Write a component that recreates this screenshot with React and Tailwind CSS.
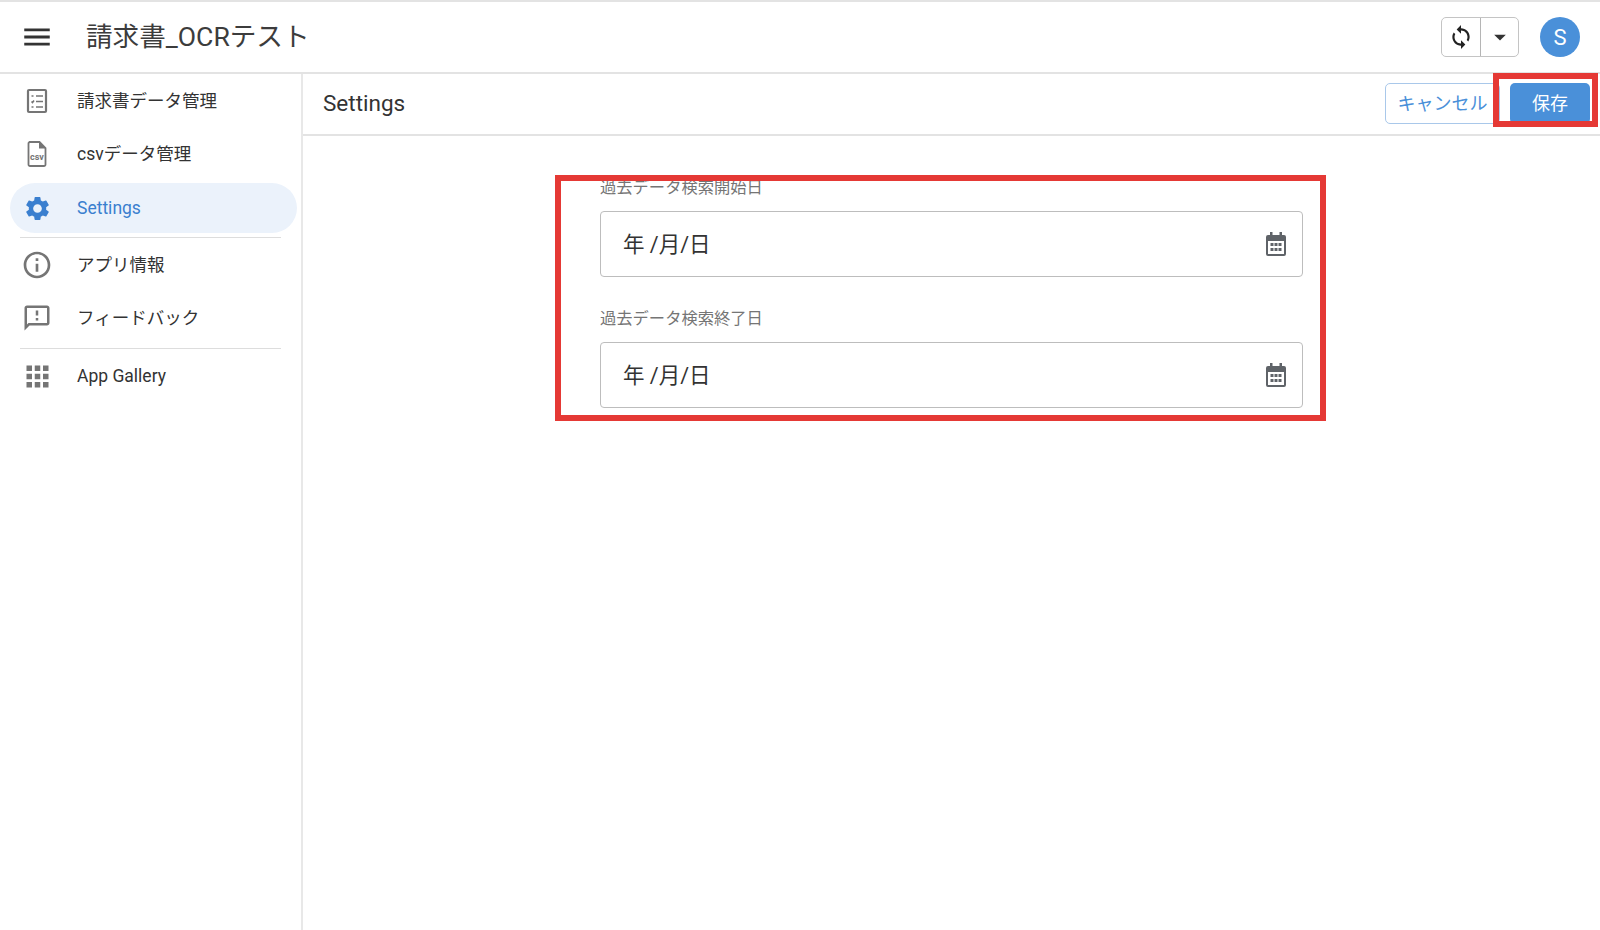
import { MdMenu, MdSettings, MdInfoOutline, MdOutlineFeedback, MdApps, MdSync, MdArrowDropDown } from "react-icons/md";

const ListIcon = () => (
  <svg width="24" height="27" viewBox="0 0 24 27" fill="none" stroke="#757575">
    <rect x="3" y="2" width="18" height="22" rx="1" strokeWidth="2.2" />
    <path d="M6.5 8h2M11 8h7M6.5 13.5l1 1 1.5-2M11 13.5h7M6.5 19h2M11 19h7" strokeWidth="1.6" />
  </svg>
);

const CsvIcon = () => (
  <svg width="20" height="26" viewBox="0 0 20 26" fill="none">
    <path d="M2.5 1h10l6 6v16.5a1.5 1.5 0 0 1-1.5 1.5H3a1.5 1.5 0 0 1-1.5-1.5V2z" stroke="#757575" strokeWidth="1.8" />
    <path d="M12 1v6.5h6.5z" fill="#757575" />
    <text x="10" y="19" textAnchor="middle" fontSize="9" fontWeight="700" fill="#757575">csv</text>
  </svg>
);

const CalendarIcon = () => (
  <svg width="20" height="24" viewBox="0 0 20 24" fill="#5f6368">
    <path d="M4 0h2.5v3h7V0H16v3h2a2 2 0 0 1 2 2v17a2 2 0 0 1-2 2H2a2 2 0 0 1-2-2V5a2 2 0 0 1 2-2h2zM2 9v13h16V9z" />
    <path d="M4.5 11h3v3h-3zM8.5 11h3v3h-3zM12.5 11h3v3h-3zM4.5 16h3v3h-3zM8.5 16h3v3h-3zM12.5 16h3v3h-3z" />
  </svg>
);

const NavItem = ({ icon, label, active, className = "" }) => (
  <div className={`flex items-center h-[50px] pl-[8px] rounded-full ${active ? "bg-[#ebf2fb] text-[#3a7fcf]" : "text-[#333333]"} ${className}`}>
    <div className="w-[38px] flex justify-center">{icon}</div>
    <span className="ml-[21px] text-[17.5px]">{label}</span>
  </div>
);

const DateField = ({ label, className = "" }) => (
  <div className={className}>
    <div className="text-[16.3px] leading-[24px] text-[#757575]">{label}</div>
    <div className="mt-[11px] h-[66px] border border-[#bdbdbd] rounded-[4px] flex items-center justify-between pl-[22px] pr-[16px]">
      <span className="text-[21.5px] text-[#333333] pt-[2px]">年 /月/日</span>
      <CalendarIcon />
    </div>
  </div>
);

export default function App() {
  return (
    <div
      className="relative w-[1600px] h-[930px] overflow-hidden bg-white flex flex-col"
      style={{ fontFamily: 'Roboto, "Noto Sans CJK JP", sans-serif' }}
    >
      <header className="h-[74px] shrink-0 border-t-2 border-b-2 border-[#e3e3e3] flex items-center">
        <MdMenu className="ml-[20px] text-[#333333]" size={34} />
        <h1 className="ml-[32px] text-[26.6px] font-normal text-[#3c3c3c]">請求書_OCRテスト</h1>
        <div className="ml-auto flex items-center">
          <div className="flex h-[40px] w-[78px] border border-[#c4c4c4] rounded-[5px]">
            <div className="w-[39px] border-r border-[#b5b5b5] flex items-center justify-center">
              <MdSync size={26} className="text-[#222222]" />
            </div>
            <div className="flex-1 flex items-center justify-center">
              <MdArrowDropDown size={28} className="text-[#333333]" />
            </div>
          </div>
          <div className="ml-[21px] mr-[20px] w-[40px] h-[40px] rounded-full bg-[#4a90d9] text-white text-[22px] flex items-center justify-center">
            S
          </div>
        </div>
      </header>

      <div className="flex-1 flex min-h-0">
        <aside className="w-[303px] shrink-0 border-r-2 border-[#e8e8e8] pl-[10px] pr-[4px] pt-[2px]">
          <NavItem icon={<ListIcon />} label="請求書データ管理" />
          <NavItem icon={<CsvIcon />} label="csvデータ管理" className="mt-[3px]" />
          <NavItem icon={<MdSettings size={29} className="text-[#3a7fcf]" />} label="Settings" active className="mt-[4px]" />
          <div className="mt-[4px] ml-[10px] mr-[16px] border-t border-[#dddddd]" />
          <NavItem icon={<MdInfoOutline size={32} className="text-[#757575]" />} label="アプリ情報" className="mt-[2px]" />
          <NavItem icon={<MdOutlineFeedback size={30} className="text-[#757575]" />} label="フィードバック" className="mt-[3px]" />
          <div className="mt-[5px] ml-[10px] mr-[16px] border-t border-[#dddddd]" />
          <NavItem icon={<MdApps size={33} className="text-[#757575]" />} label="App Gallery" className="mt-[2px]" />
        </aside>

        <main className="flex-1 min-w-0">
          <div className="h-[62px] border-b-2 border-[#e3e3e3] flex items-center pl-[20px]">
            <h2 className="text-[22.5px] font-normal text-[#333333]">Settings</h2>
            <button className="ml-auto mb-[2px] h-[41px] w-[115px] border border-[#a9c8ea] rounded-[5px] text-[18px] text-[#4a90d9]">
              キャンセル
            </button>
            <button className="ml-[10px] mr-[10px] mb-[2px] h-[41px] w-[80px] bg-[#4a90d9] rounded-[5px] text-[18px] text-white">
              保存
            </button>
          </div>
          <div className="ml-[297px] mt-[40px] w-[703px]">
            <DateField label="過去データ検索開始日" />
            <DateField label="過去データ検索終了日" className="mt-[30px]" />
          </div>
        </main>
      </div>

      <div className="absolute left-[1493px] top-[73px] w-[105px] h-[54px] border-[6px] border-[#e53935]" />
      <div className="absolute left-[555px] top-[175px] w-[771px] h-[246px] border-[6px] border-[#e53935]" />
    </div>
  );
}
